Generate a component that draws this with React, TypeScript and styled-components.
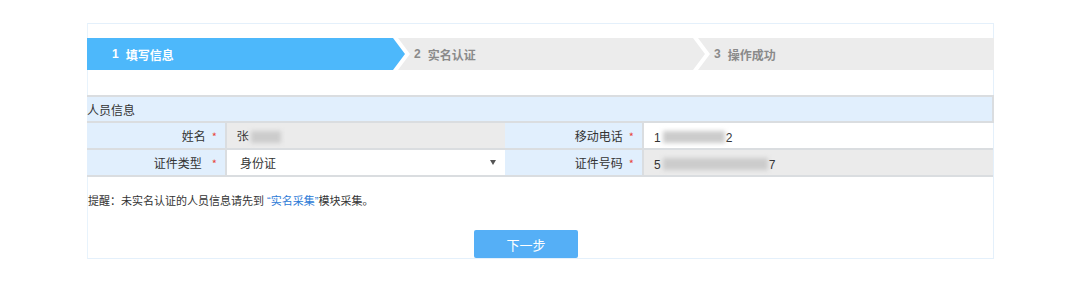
import styled, { createGlobalStyle } from "styled-components";

const GlobalStyle = createGlobalStyle`
  html, body {
    margin: 0;
    padding: 0;
    background: #ffffff;
  }
  body {
    font-family: "Noto Sans CJK SC", "Liberation Sans", sans-serif;
    font-size: 12px;
    color: #333333;
  }
  * {
    box-sizing: border-box;
  }
`;

const Panel = styled.div`
  width: 907px;
  height: 236px;
  margin: 23px 0 0 87px;
  border: 1px solid #e4f0fb;
  border-left-color: #e8f3fc;
  padding-top: 14px;
  display: flex;
  flex-direction: column;
`;

const Steps = styled.div`
  display: flex;
  height: 32px;
  margin-left: -1px;
  margin-right: -1px;
`;

interface StepProps {
  active?: boolean;
  first?: boolean;
  last?: boolean;
  w: number;
}

const Step = styled.div<StepProps>`
  flex: ${(p) => (p.last ? "1" : `0 0 ${p.w}px`)};
  margin-left: ${(p) => (p.first ? "0" : "-7px")};
  height: 32px;
  display: flex;
  align-items: center;
  gap: 7px;
  padding-left: ${(p) => (p.first ? "25px" : "16px")};
  background: ${(p) => (p.active ? "#4db8fb" : "#ececec")};
  color: ${(p) => (p.active ? "#ffffff" : "#8a8a8a")};
  font-weight: bold;
  font-size: 12px;
  clip-path: ${(p) =>
    p.last
      ? "polygon(0 0, 100% 0, 100% 100%, 0 100%, 12px 50%)"
      : p.first
      ? "polygon(0 0, calc(100% - 12px) 0, 100% 50%, calc(100% - 12px) 100%, 0 100%)"
      : "polygon(0 0, calc(100% - 12px) 0, 100% 50%, calc(100% - 12px) 100%, 0 100%, 12px 50%)"};
`;

const StepNum = styled.span`
  font-family: "Liberation Sans", sans-serif;
  font-weight: bold;
`;

const InfoTable = styled.table`
  margin-top: 25px;
  margin-left: -1px;
  width: 907px;
  border-collapse: collapse;
  table-layout: fixed;
  font-size: 12px;
`;

const HeadCell = styled.th`
  height: 26px;
  background: #e1effd;
  border: 2px solid #dadde0;
  border-left: none;
  text-align: left;
  font-weight: normal;
  color: #333333;
  padding: 0;
`;

const Label = styled.td`
  height: 27px;
  background: #e1effd;
  border: 2px solid #dadde0;
  border-left: none;
  text-align: right;
  padding: 0 8px 0 0;
  color: #333333;
`;

const Star = styled.span<{ wide?: boolean }>`
  color: #e8453c;
  margin-left: ${(p) => (p.wide ? "10px" : "6px")};
  font-size: 11px;
`;

const ValueCell = styled.td<{ readonly?: boolean }>`
  height: 27px;
  background: ${(p) => (p.readonly ? "#ebebeb" : "#ffffff")};
  border: 2px solid #dadde0;
  border-right: none;
  padding: 0 0 0 10px;
  color: #333333;
`;

const Mask = styled.span<{ w: number }>`
  display: inline-block;
  vertical-align: middle;
  width: ${(p) => p.w}px;
  height: 12px;
  margin: 0 1px 0 2px;
  background: #cccccc;
  filter: blur(2px);
`;

const Plain = styled.span`
  font-family: "Liberation Sans", sans-serif;
  vertical-align: middle;
`;

const SelectBox = styled.div`
  display: flex;
  align-items: center;
  justify-content: space-between;
  height: 100%;
  margin-left: -10px;
  padding: 0 9px 0 13px;
  background: #ffffff;
`;

const Caret = styled.span`
  width: 0;
  height: 0;
  border-left: 3px solid transparent;
  border-right: 3px solid transparent;
  border-top: 5px solid #555555;
`;

const Notice = styled.div`
  margin-top: 16px;
  font-family: "Liberation Sans", "Noto Sans CJK SC", sans-serif;
  font-size: 11px;
  color: #333333;
  line-height: 16px;
`;

const Link = styled.a`
  color: #2c7ad6;
  text-decoration: none;
`;

const ActionRow = styled.div`
  margin-top: auto;
  display: flex;
  padding-left: 386px;
`;

const NextButton = styled.button`
  width: 104px;
  height: 28px;
  border: none;
  border-radius: 2px;
  background: #55aff6;
  color: #ffffff;
  font-family: "Noto Sans CJK SC", sans-serif;
  font-size: 13px;
  cursor: pointer;
`;

export default function App() {
  return (
    <>
      <GlobalStyle />
      <Panel>
        <Steps>
          <Step active first w={318}>
            <StepNum>1</StepNum>填写信息
          </Step>
          <Step w={307}>
            <StepNum>2</StepNum>实名认证
          </Step>
          <Step last w={0}>
            <StepNum>3</StepNum>操作成功
          </Step>
        </Steps>

        <InfoTable>
          <colgroup>
            <col style={{ width: 139 }} />
            <col style={{ width: 279 }} />
            <col style={{ width: 138 }} />
            <col />
          </colgroup>
          <thead>
            <tr>
              <HeadCell colSpan={4}>人员信息</HeadCell>
            </tr>
          </thead>
          <tbody>
            <tr>
              <Label>
                姓名<Star>*</Star>
              </Label>
              <ValueCell readonly>
                <Plain>张</Plain>
                <Mask w={30} />
              </ValueCell>
              <Label>
                移动电话<Star>*</Star>
              </Label>
              <ValueCell>
                <Plain>1</Plain>
                <Mask w={62} />
                <Plain>2</Plain>
              </ValueCell>
            </tr>
            <tr>
              <Label>
                证件类型<Star wide>*</Star>
              </Label>
              <ValueCell>
                <SelectBox>
                  <span>身份证</span>
                  <Caret />
                </SelectBox>
              </ValueCell>
              <Label>
                证件号码<Star>*</Star>
              </Label>
              <ValueCell readonly>
                <Plain>5</Plain>
                <Mask w={105} />
                <Plain>7</Plain>
              </ValueCell>
            </tr>
          </tbody>
        </InfoTable>

        <Notice>
          提醒：未实名认证的人员信息请先到 <Link href="#">“实名采集”</Link>模块采集。
        </Notice>

        <ActionRow>
          <NextButton>下一步</NextButton>
        </ActionRow>
      </Panel>
    </>
  );
}
